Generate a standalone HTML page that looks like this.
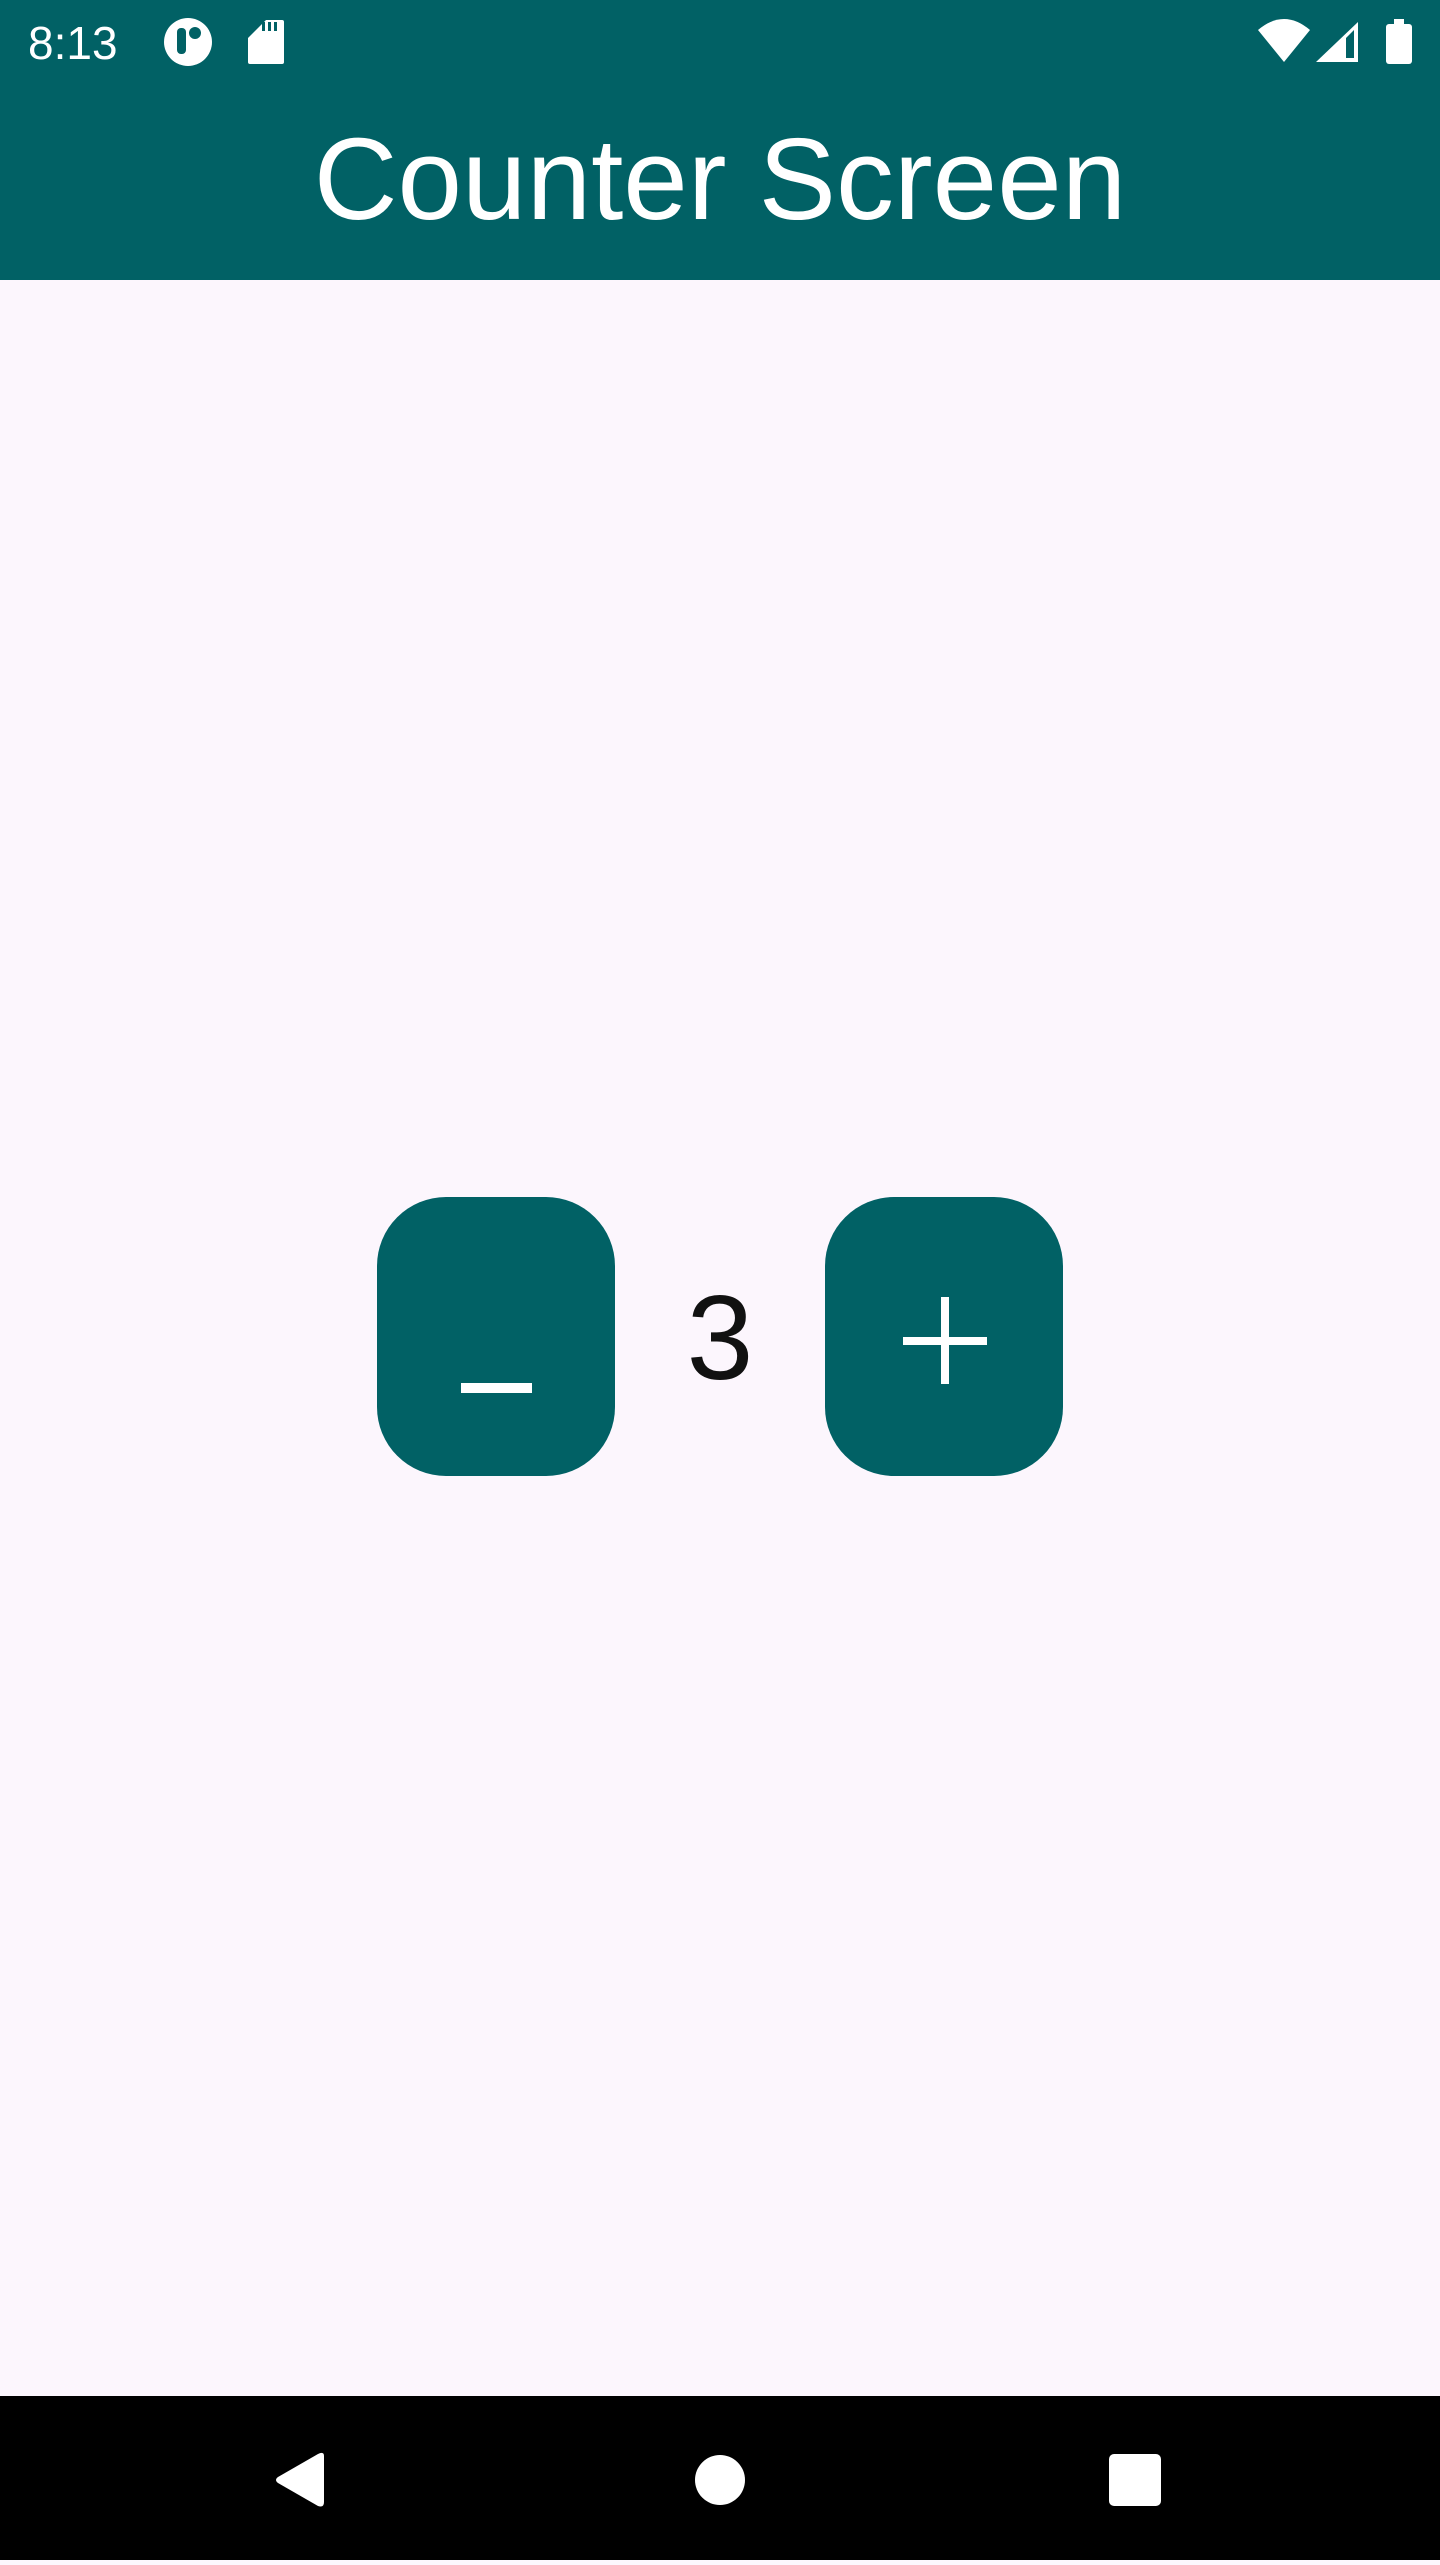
<!DOCTYPE html>
<html><head><meta charset="utf-8"><style>
html,body{margin:0;padding:0;width:1440px;height:2560px;overflow:hidden;background:#FCF6FD;font-family:"Liberation Sans",sans-serif;}
.hdr{position:absolute;left:0;top:0;width:1440px;height:280px;background:#016165;}
.title{position:absolute;left:0;width:1440px;top:114px;text-align:center;color:#fff;font-size:116px;line-height:130px;}
.time{position:absolute;left:28px;top:18px;color:#fff;font-size:46px;line-height:50px;}
.btn{position:absolute;top:1197px;width:238px;height:279px;background:#016165;border-radius:69px;color:#fff;}
.num{position:absolute;left:620px;width:200px;top:1273px;text-align:center;font-size:120px;line-height:130px;color:#111;}
.nav{position:absolute;left:0;top:2396px;width:1440px;height:164px;background:#000;}
</style></head><body>
<div class="hdr">
<div class="time">8:13</div>
<svg style="position:absolute;left:0;top:0" width="1440" height="91">
<circle cx="188" cy="42" r="24" fill="#fff"/><rect x="177" y="28" width="9" height="26" rx="4" fill="#016165"/><circle cx="195" cy="33" r="6" fill="#016165"/>
<path d="M258 28 L266 20 L282 20 Q284 20 284 22 L284 62 Q284 64 282 64 L250 64 Q248 64 248 62 L248 38 Z" fill="#fff"/>
<rect x="262" y="22" width="3" height="9" fill="#016165"/><rect x="268" y="22" width="3" height="9" fill="#016165"/><rect x="274" y="22" width="3" height="9" fill="#016165"/>
<path d="M1258 30 Q1284 8 1310 30 L1284 62 Z" fill="#fff"/>
<path d="M1316 62 L1358 22 L1358 62 Z" fill="#fff"/><path d="M1346 58 L1346 38 L1354 30 L1354 58 Z" fill="#016165"/>
<rect x="1386" y="24" width="26" height="40" rx="3" fill="#fff"/><rect x="1394" y="19" width="10" height="6" fill="#fff"/>
</svg>
<div class="title">Counter Screen</div>
</div>
<div class="btn" style="left:377px"><div style="position:absolute;left:84px;top:186px;width:71px;height:10px;background:#fff"></div></div>
<div class="num">3</div>
<div class="btn" style="left:825px"><div style="position:absolute;left:78px;top:140px;width:84px;height:8px;background:#fff"></div><div style="position:absolute;left:116px;top:100px;width:8px;height:87px;background:#fff"></div></div>
<div class="nav">
<svg width="1440" height="164">
<path d="M324 60 L324 106 Q324 112 318 110 L278 87 Q274 84 278 81 L318 58 Q324 55 324 60 Z" fill="#fff"/>
<circle cx="720" cy="84" r="25" fill="#fff"/>
<rect x="1109" y="58" width="52" height="52" rx="5" fill="#fff"/>
</svg>
</div>
</body></html>
